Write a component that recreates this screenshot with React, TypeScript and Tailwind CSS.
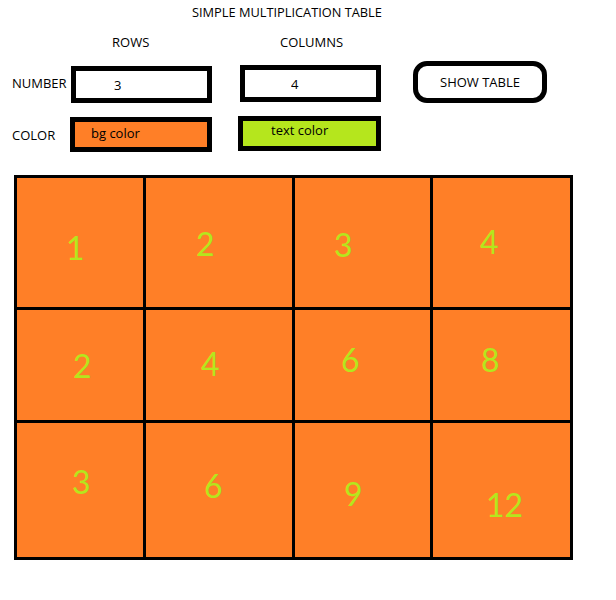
import React from "react";

type Cell = {
  value: number;
  pad: string;
};

const cells: Cell[] = [
  { value: 1, pad: "pl-[49px] pt-[54px]" },
  { value: 2, pad: "pl-[50px] pt-[50px]" },
  { value: 3, pad: "pl-[39px] pt-[51px]" },
  { value: 4, pad: "pl-[47px] pt-[48px]" },
  { value: 2, pad: "pl-[56px] pt-[40px]" },
  { value: 4, pad: "pl-[55px] pt-[38px]" },
  { value: 6, pad: "pl-[46px] pt-[34px]" },
  { value: 8, pad: "pl-[48px] pt-[34px]" },
  { value: 3, pad: "pl-[55px] pt-[43px]" },
  { value: 6, pad: "pl-[58px] pt-[47px]" },
  { value: 9, pad: "pl-[49px] pt-[55px]" },
  { value: 12, pad: "pl-[53px] pt-[66px]" },
];

export default function App() {
  return (
    <main className="w-[616px] h-[600px] bg-white text-black font-['Open_Sans',sans-serif] text-[13px] leading-[16px]">
      <h1 className="pl-[192px] pt-[4px] text-[12.8px]">SIMPLE MULTIPLICATION TABLE</h1>

      <div className="mt-[14px] flex">
        <span className="ml-[112px] w-[168px]">ROWS</span>
        <span>COLUMNS</span>
      </div>

      <div className="mt-[11px] flex items-start pl-[12px]">
        <span className="mt-[14px] w-[59px]">NUMBER</span>
        <input
          readOnly
          value="3"
          className="mt-[5px] w-[141px] h-[37px] border-[5px] border-black bg-white pl-[38px] outline-none"
        />
        <input
          readOnly
          value="4"
          className="ml-[28px] mt-[4px] w-[141px] h-[37px] border-[5px] border-black bg-white pl-[46px] outline-none"
        />
        <button className="ml-[32px] w-[134px] h-[42px] rounded-[14px] border-[5px] border-black bg-white">
          SHOW TABLE
        </button>
      </div>

      <div className="mt-[13px] flex items-start pl-[12px]">
        <span className="mt-[11px] w-[58px]">COLOR</span>
        <div className="mt-[1px] w-[142px] h-[35px] border-[5px] border-black bg-[#ff7f27] pl-[16px] pt-[3px]">
          bg color
        </div>
        <div className="ml-[26px] w-[143px] h-[35px] border-[5px] border-black bg-[#b5e61d] pl-[28px] pt-[1px]">
          text color
        </div>
      </div>

      <div className="ml-[14px] mt-[23px] grid w-[559px] grid-cols-[126px_146px_135px_137px] grid-rows-[129px_110px_134px] gap-[3px] bg-black p-[3px]">
        {cells.map((cell, i) => (
          <div key={i} className={`bg-[#ff7f27] ${cell.pad}`}>
            <span className="block font-['Lato',sans-serif] text-[32px] leading-[32px] text-[#b5e61d]">
              {cell.value}
            </span>
          </div>
        ))}
      </div>
    </main>
  );
}
